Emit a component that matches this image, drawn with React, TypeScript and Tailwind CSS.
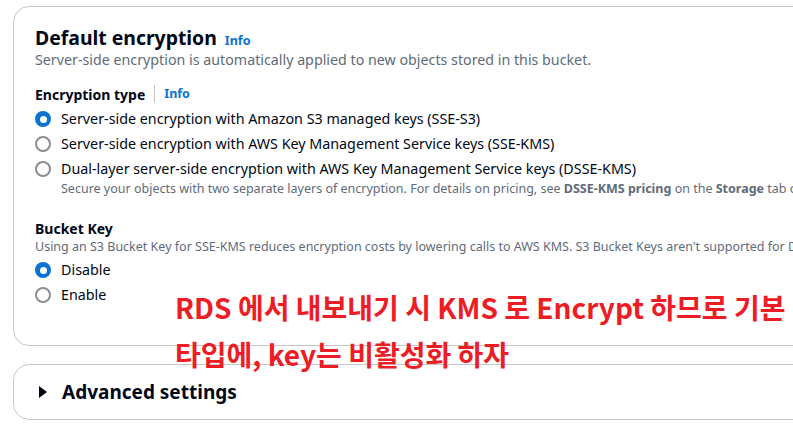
import React from "react";

const font = { fontFamily: '"Noto Sans", "Open Sans", sans-serif' };

function Radio({ checked, label, desc }: { checked?: boolean; label: React.ReactNode; desc?: React.ReactNode }) {
  return (
    <div className="flex items-start gap-[10px]">
      <div className="h-[24px] flex items-center shrink-0">
        {checked ? (
          <div className="w-[16px] h-[16px] rounded-full bg-[#0972d3] flex items-center justify-center">
            <div className="w-[7px] h-[7px] rounded-full bg-white" />
          </div>
        ) : (
          <div className="w-[16px] h-[16px] rounded-full border-2 border-[#8c8c94] bg-white" />
        )}
      </div>
      <div className="flex flex-col">
        <div className="text-[14.3px] leading-[24px] text-[#000716]">{label}</div>
        {desc && <div className="text-[12.5px] leading-[16px] text-[#5f6b7a] whitespace-nowrap">{desc}</div>}
      </div>
    </div>
  );
}

export default function App() {
  return (
    <div className="w-[793px] h-[436px] overflow-hidden bg-white relative" style={font}>
      <div className="pl-[13px] pt-[6px] flex flex-col gap-[18px]">
        <div className="w-[1000px] h-[340px] border border-[#c6c6cd] rounded-[16px] pl-[21px] pt-[17px]">
          <div className="flex items-baseline gap-[8px]">
            <span className="text-[19.4px] leading-[28px] font-bold text-[#000716]">Default encryption</span>
            <span className="text-[12.5px] font-bold text-[#0972d3]">Info</span>
          </div>
          <div className="text-[14.25px] leading-[20px] text-[#5f6b7a] -mt-[2px]">
            Server-side encryption is automatically applied to new objects stored in this bucket.
          </div>
          <div className="flex items-center mt-[14px] h-[20px]">
            <span className="text-[14px] font-bold text-[#000716]">Encryption type</span>
            <span className="mx-[9px] w-px h-[18px] bg-[#c6c6cd]" />
            <span className="text-[12.5px] font-bold text-[#0972d3]">Info</span>
          </div>
          <div className="flex flex-col mt-[3px] gap-[1px]">
            <Radio checked label="Server-side encryption with Amazon S3 managed keys (SSE-S3)" />
            <Radio label="Server-side encryption with AWS Key Management Service keys (SSE-KMS)" />
            <Radio
              label="Dual-layer server-side encryption with AWS Key Management Service keys (DSSE-KMS)"
              desc={
                <>
                  Secure your objects with two separate layers of encryption. For details on pricing, see{" "}
                  <b>DSSE-KMS pricing</b> on the <b>Storage</b> tab of the Amazon S3 pricing page.
                </>
              }
            />
          </div>
          <div className="mt-[22px] text-[14px] leading-[20px] font-bold text-[#000716]">Bucket Key</div>
          <div className="text-[12.5px] leading-[16px] text-[#5f6b7a] whitespace-nowrap">
            Using an S3 Bucket Key for SSE-KMS reduces encryption costs by lowering calls to AWS KMS. S3 Bucket Keys aren't supported for DSSE-KMS.
          </div>
          <div className="flex flex-col mt-[3px] gap-[1px]">
            <Radio checked label="Disable" />
            <Radio label="Enable" />
          </div>
        </div>
        <div className="w-[1000px] h-[56px] border border-[#c6c6cd] rounded-[16px] pl-[24px] flex items-center gap-[14px]">
          <svg width="10" height="12" viewBox="0 0 10 12">
            <path d="M1 0 L9 6 L1 12 Z" fill="#000716" />
          </svg>
          <span className="text-[19px] font-bold text-[#000716]">Advanced settings</span>
        </div>
      </div>
      <div
        className="absolute left-[175px] top-[284px] text-[28px] leading-[47px] font-bold text-[#ee1c25] whitespace-nowrap"
        style={{ fontFamily: '"Noto Sans CJK KR", "Noto Sans", sans-serif' }}
      >
        <div>RDS 에서 내보내기 시 KMS 로 Encrypt 하므로 기본</div>
        <div>타입에, key는 비활성화 하자</div>
      </div>
    </div>
  );
}
